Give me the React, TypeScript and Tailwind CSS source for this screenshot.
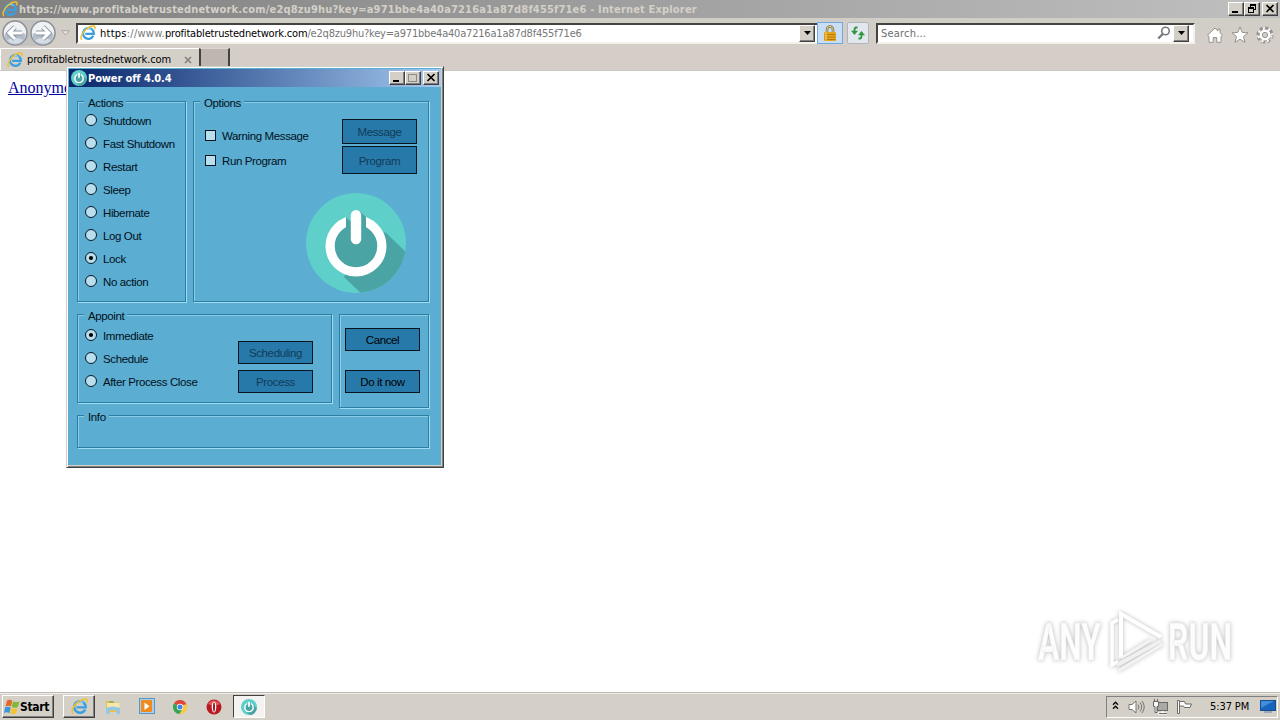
import type { ReactNode } from 'react'

const ui = 'font-["DejaVu_Sans_Condensed","DejaVu_Sans",sans-serif]'

const IeLogo = ({ size = 16 }: { size?: number }) => (
    <svg width={size} height={size} viewBox="0 0 16 16" fill="none" className="shrink-0">
        <path d="M13.3 10.8A5.4 5.4 0 1 1 13.8 8.8H5.2" stroke="#3a9fe2" strokeWidth="2.3" />
        <path d="M4 6A4.8 4.8 0 0 1 11.5 4.7" stroke="#a5defb" strokeWidth="1" />
        <path d="M2 14.8C-.5 13 2.2 7.2 6.5 4 10 1.2 14.6-.3 15 2.1c.2.8-.1 1.6-.5 2.3" stroke="#edc02f" strokeWidth="1.5" />
    </svg>
)

const PowerLogo = ({ size }: { size: number }) => (
    <svg width={size} height={size} viewBox="0 0 100 100" className="shrink-0">
        <circle cx="50" cy="50" r="50" fill="#5fcfca" />
        <path d="M79 39 99.3 58.5A50 50 0 0 1 54.5 99.8L38 84 50 60Z" fill="#4ba4a4" />
        <circle cx="50" cy="53" r="26" fill="#4ba4a4" />
        <circle cx="50" cy="53" r="25.9" fill="none" stroke="#fff" strokeWidth="9.2" />
        <path d="M40 21H60V36H40Z" fill="#5fcfca" />
        <path d="M40 24 46 30V36H40ZM53.5 18 60 24V36H53.5Z" fill="#4ba4a4" />
        <path d="M50 22.2V46" stroke="#fff" strokeWidth="10.4" strokeLinecap="round" />
    </svg>
)

const CaptionButton = ({ kind }: { kind: 'min' | 'max' | 'restore' | 'close' }) => (
    <div className="h-[14px] w-4 border border-t-white border-l-white border-r-[#404040] border-b-[#404040] bg-[#d4d0c8] shadow-[inset_-1px_-1px_0_#808080]">
        <svg width="14" height="12" viewBox="0 0 14 12" fill="none" stroke="#000" shapeRendering="crispEdges">
            {kind === 'min' && <path d="M3 9H9" strokeWidth="2" />}
            {kind === 'max' && <path d="M2 2H11M2.5 2V10M10.5 2V10M2 9.5H11" stroke="#8c8a84" />}
            {kind === 'restore' && (
                <>
                    <path d="M5 2H11M5.5 1V4M10.5 1V7M9 6.5H11" />
                    <path d="M3 5H9M3.5 4V10M8.5 4V10M3 9.5H9" />
                    <path d="M5 1.5H11M3 4.5H9" />
                </>
            )}
            {kind === 'close' && <path d="M3.5 2 10.5 9M10.5 2 3.5 9" strokeWidth="1.7" shapeRendering="auto" />}
        </svg>
    </div>
)

const DropButton = () => (
    <div className="flex h-[17px] w-4 items-center justify-center border border-t-white border-l-white border-r-[#404040] border-b-[#404040] bg-[#d4d0c8] shadow-[inset_-1px_-1px_0_#808080]">
        <svg width="7" height="4" viewBox="0 0 7 4"><path d="M0 0H7L3.5 4Z" /></svg>
    </div>
)

const NavButton = ({ flip }: { flip?: boolean }) => (
    <svg width="26" height="26" viewBox="0 0 26 26" className={flip ? '-scale-x-100' : ''}>
        <circle cx="13" cy="13" r="12" fill="#eff1f3" stroke="#8b9096" strokeWidth="1.5" />
        <path d="M2.5 14A10.5 10.5 0 0 0 23.5 14Q13 9 2.5 14Z" fill="#b3bdc9" />
        <path d="M5 20A10.5 10.5 0 0 0 21 20Q13 16 5 20Z" fill="#d5dde6" />
        <path d="M20 13H8M13 7 7 13l6 6" fill="none" stroke="#8995a3" strokeWidth="4.8" />
        <path d="M20 13H8M13 7 7 13l6 6" fill="none" stroke="#fff" strokeWidth="3.1" />
    </svg>
)

const Group = ({ title, className, children }: { title?: string; className: string; children?: ReactNode }) => (
    <div className={`relative border border-[#2e7da3] shadow-[1px_1px_0_#9fdcf3,inset_1px_1px_0_#8ccbe5] ${className}`}>
        {title && <span className="absolute -top-[5px] left-[6px] bg-[#5badd2] pr-[3px] pl-1 leading-3">{title}</span>}
        {children}
    </div>
)

const Radio = ({ label, checked }: { label: string; checked?: boolean }) => (
    <div className="flex h-[23px] items-center">
        <svg width="13" height="13" viewBox="0 0 13 13">
            <circle cx="6" cy="6" r="5.5" fill="#b9dfef" stroke="#071822" />
            {checked && <circle cx="6" cy="6" r="2.1" />}
        </svg>
        <span className="ml-[5px] pt-[1px] leading-3 whitespace-nowrap">{label}</span>
    </div>
)

const Check = ({ label }: { label: string }) => (
    <div className="flex h-[25px] items-center">
        <div className="size-[11px] border border-[#071822] bg-[#b9dfef]" />
        <span className="ml-[6px] pt-[1px] leading-3 whitespace-nowrap">{label}</span>
    </div>
)

const Button = ({ label, disabled, className }: { label: string; disabled?: boolean; className: string }) => (
    <div className={`flex w-[75px] items-center justify-center border border-[#06141e] bg-[#2779a9] pt-[1px] leading-3 ${disabled ? 'text-[#123b59]' : 'text-black'} ${className}`}>
        {label}
    </div>
)

const actions = ['Shutdown', 'Fast Shutdown', 'Restart', 'Sleep', 'Hibernate', 'Log Out', 'Lock', 'No action']

const PowerWindow = () => (
    <div className='absolute top-[66px] left-[66px] h-[402px] w-[378px] border border-t-[#d4d0c8] border-l-[#d4d0c8] border-r-[#404040] border-b-[#404040] bg-[#5badd2] font-["Liberation_Sans",sans-serif] text-[11.5px] tracking-[-0.38px] text-[#03101a] shadow-[inset_1px_1px_0_#fff,inset_-1px_-1px_0_#808080,inset_-2px_-2px_0_#d4d0c8]'>
        <div className="mx-[2px] mt-[2px] flex h-[18px] items-center bg-linear-to-r from-[#0a246a] to-[#a6caf0] pl-[2px] pr-[2px]">
            <PowerLogo size={16} />
            <span className={`${ui} ml-[1px] text-[11px] leading-none font-bold tracking-[-0.12px] text-white`}>Power off 4.0.4</span>
            <div className="ml-auto flex">
                <CaptionButton kind="min" />
                <CaptionButton kind="max" />
                <div className="w-[2px]" />
                <CaptionButton kind="close" />
            </div>
        </div>
        <div className="px-[10px] pt-[14px]">
            <div className="flex gap-[7px]">
                <Group title="Actions" className="h-[201px] w-[109px] pt-[7px] pl-[7px]">
                    {actions.map((a) => <Radio key={a} label={a} checked={a === 'Lock'} />)}
                </Group>
                <Group title="Options" className="h-[201px] w-[236px]">
                    <div className="flex justify-between pr-[11px] pl-[11px]">
                        <div className="pt-[21px]">
                            <Check label="Warning Message" />
                            <Check label="Run Program" />
                        </div>
                        <div className="flex flex-col gap-[2px] pt-[17px]">
                            <Button label="Message" disabled className="h-[25px]" />
                            <Button label="Program" disabled className="h-[28px]" />
                        </div>
                    </div>
                    <div className="mt-[19px] ml-[112px]"><PowerLogo size={100} /></div>
                </Group>
            </div>
            <div className="mt-[12px] flex gap-[7px]">
                <Group title="Appoint" className="flex h-[89px] w-[255px] justify-between pr-[18px] pl-[7px]">
                    <div className="pt-[9px]">
                        <Radio label="Immediate" checked />
                        <Radio label="Schedule" />
                        <Radio label="After Process Close" />
                    </div>
                    <div className="flex flex-col gap-[6px] pt-[26px]">
                        <Button label="Scheduling" disabled className="h-[23px]" />
                        <Button label="Process" disabled className="h-[23px]" />
                    </div>
                </Group>
                <Group className="flex h-[94px] w-[90px] flex-col gap-[19px] pt-[13px] pl-[5px]">
                    <Button label="Cancel" className="h-[23px]" />
                    <Button label="Do it now" className="h-[23px]" />
                </Group>
            </div>
            <Group title="Info" className="mt-[7px] h-[33px] w-[352px]" />
        </div>
    </div>
)

const Browser = () => (
    <>
        <div className="flex h-[18px] shrink-0 items-center bg-linear-to-r from-[#808080] to-[#c0c0c0] pr-[2px] pl-[2px]">
            <IeLogo />
            <span className={`${ui} ml-[1px] text-[11px] leading-none font-bold tracking-[0.17px] whitespace-nowrap text-[#d4d0c8]`}>https://www.profitabletrustednetwork.com/e2q8zu9hu?key=a971bbe4a40a7216a1a87d8f455f71e6 - Internet Explorer</span>
            <div className="ml-auto flex">
                <CaptionButton kind="min" />
                <CaptionButton kind="restore" />
                <div className="w-[2px]" />
                <CaptionButton kind="close" />
            </div>
        </div>
        <div className="flex h-[30px] shrink-0 items-center bg-linear-to-b from-[#d0cec6] to-[#d5cec8] pl-[2px]">
            <div className="flex gap-[2px] rounded-full bg-[#c3c2c0]">
                <NavButton />
                <NavButton flip />
            </div>
            <svg width="9" height="6" viewBox="0 0 9 6" className="ml-[5px]"><path d="M.7.7H8.3L4.5 5Z" fill="#e7e4df" stroke="#aaa7a2" /></svg>
            <div className="ml-[6px] flex h-[21px] w-[741px] items-center border-t-2 border-b-2 border-l-2 border-t-[#45433f] border-l-[#45433f] border-b-[#f4f1ed] bg-white pr-[2px] pl-[2px]">
                <IeLogo />
                <span className={`${ui} ml-[4px] text-[11px] leading-none whitespace-nowrap text-[#777]`}>
                    <span className="tracking-[0.25px]"><span className="text-black">https</span>://www.</span>
                    <span className="tracking-[-0.18px] text-black">profitabletrustednetwork.com</span>
                    <span className="tracking-[-0.2px]">/e2q8zu9hu?key=a971bbe4a40a7216a1a87d8f455f71e6</span>
                </span>
                <div className="ml-auto"><DropButton /></div>
            </div>
            <div className="flex h-[22px] w-[26px] items-center justify-center border border-[#73a9df] bg-[#c8def5]">
                <svg width="14" height="17" viewBox="0 0 14 17">
                    <path d="M4 8V4.5a3 3 0 0 1 6 0V8" fill="none" stroke="#8a733e" strokeWidth="2.6" />
                    <path d="M4 8V4.5a3 3 0 0 1 6 0V8" fill="none" stroke="#e0cf9a" />
                    <rect x="1" y="7" width="12" height="9" rx="1" fill="#e4a51b" />
                    <path d="M1.5 9.5H12.5M1.5 12H12.5M1.5 14.5H12.5" stroke="#b97a10" />
                    <path d="M3 7.5V15.5" stroke="#ffdf6e" />
                </svg>
            </div>
            <div className="ml-[4px] flex size-[22px] items-center justify-center rounded-xs border border-[#b1b4b8] bg-[#e1e7ec]">
                <svg width="14" height="14" viewBox="0 0 14 14" fill="none" stroke="#2e9640" strokeWidth="1.8">
                    <path d="M6.5 1.5H5Q3.5 1.5 3.5 4V6" /><path d="M0 4.8H7L3.5 9Z" fill="#2e9640" stroke="none" />
                    <path d="M7.5 12.5H9Q10.5 12.5 10.5 10V8" /><path d="M7 9.2H14L10.5 5Z" fill="#2e9640" stroke="none" />
                </svg>
            </div>
            <div className="ml-[7px] flex h-[21px] w-[319px] items-center border-2 border-t-[#45433f] border-r-[#f4f1ed] border-b-[#f4f1ed] border-l-[#45433f] bg-white pr-[4px] pl-[3px]">
                <span className={`${ui} text-[11px] leading-none tracking-[0.2px] text-[#6d6d6d]`}>Search...</span>
                <svg width="14" height="14" viewBox="0 0 14 14" className="mr-[2px] ml-auto" fill="none" stroke="#74787d">
                    <circle cx="8.5" cy="5" r="3.8" strokeWidth="1.6" /><path d="M5.7 8 1.3 12.5" strokeWidth="2.3" />
                </svg>
                <DropButton />
            </div>
            <div className="mt-[4px] ml-[11px] flex gap-[7px]">
                <svg width="18" height="18" viewBox="0 0 18 18"><path d="M9 2 1.5 9.2 3 10.5V16.3H7.2V11.5h3.5v4.8H15V10.5l1.5-1.3L14 6.8V3H12v1.9Z" fill="#fff" stroke="#95928e" /></svg>
                <svg width="18" height="18" viewBox="0 0 18 18"><path d="m9 1 2.2 5.4 5.8.4-4.5 3.7 1.5 5.8L9 13.2 4 16.3l1.5-5.8L1 6.8l5.8-.4Z" fill="#fff" stroke="#95928e" /></svg>
                <svg width="18" height="18" viewBox="0 0 18 18">
                    <circle cx="9" cy="9" r="6.9" fill="none" stroke="#95928e" strokeWidth="3.4" strokeDasharray="3.1 2.32" />
                    <circle cx="9" cy="9" r="6" fill="#fff" stroke="#95928e" />
                    <circle cx="9" cy="9" r="6.5" fill="none" stroke="#fff" strokeWidth="2.3" strokeDasharray="1.8 3.62" strokeDashoffset="-.65" />
                    <circle cx="9" cy="9" r="2.6" fill="#d4cec8" stroke="#95928e" />
                </svg>
            </div>
        </div>
        <div className="flex h-[23px] shrink-0 border-b border-[#cac8c2] bg-[#d5cec8]">
            <div className="flex h-[22px] w-[199px] items-center border-t border-l border-white bg-[#d4d0c8] pl-[6px]">
                <IeLogo />
                <span className={`${ui} ml-[4px] text-[11px] leading-none tracking-[-0.13px] text-black`}>profitabletrustednetwork.com</span>
                <svg width="8" height="8" viewBox="0 0 8 8" className="mr-[7px] ml-auto"><path d="m1 1 6 6M7 1 1 7" stroke="#85817c" strokeWidth="1.7" /></svg>
            </div>
            <div className="h-[18px] w-[31px] border-r-2 border-l-2 border-t border-t-[#d9d6d2] border-r-[#45433f] border-l-[#45433f] bg-[#bfb6b0]" />
        </div>
        <div className='grow bg-white pt-[8px] pl-[8px] font-["Liberation_Serif",serif] text-base leading-[18px] text-[#0000a0]'>
            <span className="underline">Anonymous</span>
        </div>
    </>
)

const Watermark = () => (
    <svg width="212" height="72" viewBox="0 0 212 72" className="absolute top-[605px] left-[1033px] overflow-visible drop-shadow-[0_0_2px_#bbb]">
        <g fill="#fdfdfd" stroke="#ececec" strokeWidth=".6" className='font-["Roboto",sans-serif] text-[51px] font-bold'>
            <text x="5" y="55" textLength="63" lengthAdjust="spacingAndGlyphs">ANY</text>
            <text x="135" y="55" textLength="64" lengthAdjust="spacingAndGlyphs">RUN</text>
        </g>
        <g fill="none" stroke="#fff" strokeWidth="4">
            <path d="M88 53V9L128 32" />
            <path d="M85 14.5 79 18V60L85 56.5" strokeWidth="3.5" />
            <path d="M88 53 118 35" stroke="#f4f4f4" strokeWidth="3" />
            <path d="M84 60 128 36" stroke="#f0f0f0" />
            <path d="M85 66 130 39" stroke="#f3f3f3" strokeWidth="3" />
        </g>
    </svg>
)

const Taskbar = () => (
    <div className="flex h-[28px] shrink-0 items-center border-t border-t-[#bebbb5] bg-[#d4d0c8] pl-[2px] shadow-[inset_0_1px_0_#eeece8]">
        <div className="flex h-[23px] w-[52px] items-center border border-t-white border-l-white border-r-[#404040] border-b-[#404040] pl-px shadow-[inset_-1px_-1px_0_#808080]">
            <svg width="16" height="16" viewBox="0 0 16 16" className="shrink-0">
                <path d="M3 1.5Q6 0 8.2 1.8L7 7.4Q4.6 6 1.5 7.4Z" fill="#e56725" />
                <path d="M9 2.2Q11.6 4 15.5 2.2L13.9 8Q10.5 9.5 7.8 7.7Z" fill="#80b73c" />
                <path d="M1.2 8.3Q4.2 7 6.7 8.5L5.4 14.2Q3 12.5 0 14Z" fill="#3a96da" />
                <path d="M7.5 8.8Q10.2 10.3 13.6 9L12 14.6Q9 16 6.2 14.6Z" fill="#f3c435" />
            </svg>
            <span className={`${ui} text-[12px] leading-none font-bold tracking-[-0.3px] text-black`}>Start</span>
        </div>
        <div className="ml-[9px] flex h-[23px] w-8 items-center justify-center border border-t-white border-l-white border-r-[#404040] border-b-[#404040] shadow-[inset_-1px_-1px_0_#808080]"><IeLogo size={17} /></div>
        <svg width="16" height="16" viewBox="0 0 16 16" className="ml-[10px]">
            <path d="M1 2H7L8 3.5H14V13H1Z" fill="#e6bf58" />
            <path d="M2 4H14.5V10H2Z" fill="#f9e8a5" /><path d="M4 3H9" stroke="#51a563" />
            <path d="M1 9Q8 6 15 9V15H11.5V11H4.5V15H1Z" fill="#91c8e8" />
        </svg>
        <svg width="17" height="17" viewBox="0 0 17 17" className="ml-[17px]">
            <rect x="1.5" y=".5" width="15" height="15" fill="#a9cdea" stroke="#5796c5" />
            <rect x="3" y="2" width="11" height="12" rx="1" fill="#f08a1c" /><path d="M6.5 4.5 11.5 8.2 6.5 12Z" fill="#fff" />
        </svg>
        <svg width="14" height="14" viewBox="0 0 14 14" className="ml-[18px]">
            <path d="M7 7 .9 3.5A7 7 0 0 1 13.1 3.5Z" fill="#df4436" /><path d="M7 7 .9 3.5A7 7 0 0 0 6.5 14L10 9Z" fill="#34a554" />
            <path d="M7 7 13.1 3.5A7 7 0 0 1 6.5 14L10 8Z" fill="#f8cb38" /><path d="M7 4H13.3" stroke="#df4436" />
            <circle cx="7" cy="7" r="3.2" fill="#fff" /><circle cx="7" cy="7" r="2.5" fill="#4382e8" />
        </svg>
        <svg width="16" height="16" viewBox="0 0 16 16" className="ml-[19px]">
            <circle cx="8" cy="8" r="7.5" fill="#b91820" /><path d="M2 5A7 7 0 0 1 14 5Q8 8 2 5Z" fill="#df5556" />
            <ellipse cx="8" cy="8" rx="2.3" ry="5.5" fill="#fff" /><ellipse cx="8" cy="8" rx="1" ry="4.7" fill="#a31319" />
        </svg>
        <div className="ml-[11px] flex h-[23px] w-8 items-center justify-center border border-t-[#404040] border-l-[#404040] border-r-white border-b-white bg-[#f4f3f1]"><PowerLogo size={16} /></div>
        <div className="mr-[2px] ml-auto flex h-[22px] w-[172px] items-center border border-t-[#808080] border-l-[#808080] border-r-white border-b-white pl-[5px]">
            <svg width="7" height="9" viewBox="0 0 7 9" fill="none" stroke="#000" strokeWidth="1.3" className="mb-[2px]"><path d="m1 3.7 2.5-2.5L6 3.7M1 7.7l2.5-2.5L6 7.7" /></svg>
            <svg width="17" height="16" viewBox="0 0 17 16" fill="none" stroke="#77756f" className="ml-[9px]">
                <path d="M1 5.5H4L8 2V14L4 10.5H1Z" fill="#fff" /><path d="M10 5.5q2 2.5 0 5M12 3.5q3.5 4.5 0 9M14 2q4.5 6 0 12" />
            </svg>
            <svg width="17" height="16" viewBox="0 0 17 16" className="ml-[7px]" stroke="#6b6a66">
                <rect x="5.5" y="3.5" width="10" height="8" fill="#aaa9a5" /><path d="M6 14.5H15M10.5 12V14" stroke="#fff" strokeWidth="2" />
                <path d="M1.5 2.5H6.5V7.5H5V13.5H3V7.5H1.5ZM2.5 0V3M5.5 0V3M7 14.5H15" fill="#f8f8f7" />
            </svg>
            <svg width="17" height="16" viewBox="0 0 17 16" className="ml-[7px]" fill="#fff" stroke="#6b6a66">
                <path d="M1.5 1.5H3.5V14.5H1.5Z" /><path d="M3.5 2.5H8.5L9.5 5H15.5L14 8.5H8.5L7.5 7H3.5Z" />
            </svg>
            <span className={`${ui} ml-[17px] text-[11px] leading-none tracking-[-0.1px] whitespace-nowrap text-black`}>5:37 PM</span>
            <svg width="16" height="13" viewBox="0 0 16 13" className="mr-px ml-auto">
                <rect x=".5" y=".5" width="15" height="10" fill="#1764bd" stroke="#194d8c" /><path d="M1 1H14L1 8Z" fill="#408edb" /><path d="M4 12H12" stroke="#6583a5" />
            </svg>
        </div>
    </div>
)

const App = () => {
    return (
        <div className="relative flex h-[720px] w-[1280px] flex-col overflow-hidden bg-white">
            <Browser />
            <Taskbar />
            <PowerWindow />
            <Watermark />
        </div>
    )
}

export default App
